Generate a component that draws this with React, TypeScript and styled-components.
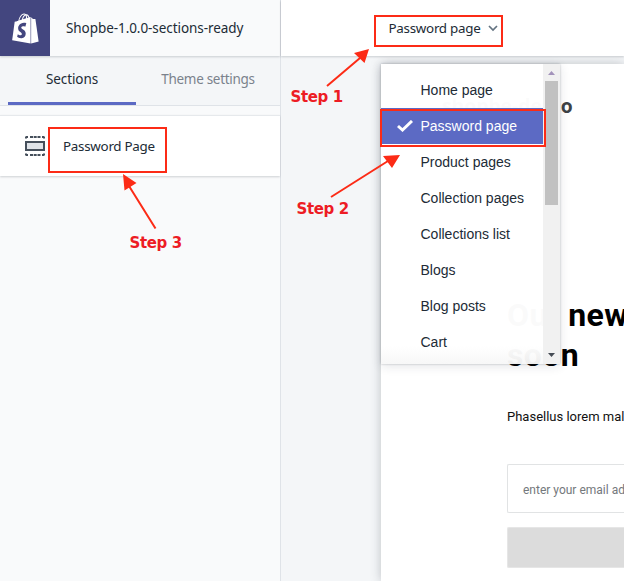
import React from 'react';
import styled, { createGlobalStyle } from 'styled-components';
import { FaShopify } from 'react-icons/fa';

const Global = createGlobalStyle`
  * { box-sizing: border-box; }
  body { margin: 0; background: #f4f6f8; font-family: "Noto Sans", sans-serif; color: #212b36; overflow: hidden; }
  p, h1, h2, ul { margin: 0; padding: 0; }
`;

const Shell = styled.div`
  position: relative;
  width: 624px;
  height: 581px;
  overflow: hidden;
  display: grid;
  grid-template-columns: 281px 1fr;
`;

const Sidebar = styled.aside`
  display: flex;
  flex-direction: column;
  background: #f9fafb;
  border-right: 1px solid #dfe3e8;
`;

const Brand = styled.header`
  height: 56px;
  flex: none;
  display: flex;
  background: #f9fafb;
  box-shadow: 0 1px 2px rgba(33, 43, 54, 0.2);
  z-index: 1;
`;

const LogoTile = styled.div`
  width: 50px;
  display: flex;
  align-items: center;
  justify-content: center;
  background: #43467f;
  color: #fff;
`;

const ThemeName = styled.p`
  padding-left: 16px;
  font-size: 13.5px;
  letter-spacing: -0.07px;
  line-height: 56px;
  white-space: nowrap;
`;

const Tabs = styled.nav`
  height: 50px;
  flex: none;
  display: flex;
  gap: 8px;
  padding: 0 8px;
  background: #f4f6f8;
  border-bottom: 1px solid #dfe3e8;
`;

const Tab = styled.div<{ $active?: boolean }>`
  flex: ${p => (p.$active ? '0 0 128px' : '1')};
  text-align: center;
  font-size: 13.5px;
  letter-spacing: ${p => (p.$active ? '-0.1px' : '-0.3px')};
  line-height: 47px;
  color: ${p => (p.$active ? '#212b36' : '#7a828c')};
  border-bottom: ${p => (p.$active ? '3px solid #5c6ac4' : '0')};
`;

const SectionCard = styled.div`
  margin-top: 9px;
  height: 61px;
  display: flex;
  align-items: center;
  gap: 18px;
  padding-left: 25px;
  background: #fff;
  border-top: 1px solid #e6e9ec;
  box-shadow: 0 1px 2px rgba(33, 43, 54, 0.2);
`;

const SectionName = styled.span`
  font-size: 13.4px;
  letter-spacing: -0.28px;
`;

const Main = styled.main`
  display: flex;
  flex-direction: column;
  background: #f4f6f8;
  min-width: 0;
`;

const TopBar = styled.header`
  height: 56px;
  flex: none;
  display: flex;
  align-items: center;
  padding-left: 107.5px;
  gap: 8px;
  background: #fff;
  font-size: 13.4px;
  letter-spacing: -0.28px;
  box-shadow: 0 1px 2px rgba(33, 43, 54, 0.2);
  z-index: 1;
`;

const Preview = styled.section`
  flex: 1;
  margin: 8px 0 0 100px;
  padding: 31px 0 0 126px;
  background: #fff;
  box-shadow: 0 0 10px rgba(33, 43, 54, 0.26);
  font-family: Roboto, sans-serif;
  white-space: nowrap;
`;

const StoreTitle = styled.h2`
  margin-left: -65px;
  font: 700 19.3px/22px "Open Sans", sans-serif;
  color: #3d4246;
`;

const Headline = styled.h1`
  margin-top: 178px;
  font: 700 32px/40px Roboto, sans-serif;
  letter-spacing: 0.4px;
  color: #000;
`;

const Blurb = styled.p`
  margin-top: 32px;
  font-size: 13px;
  line-height: 20px;
  color: #111;
`;

const EmailField = styled.div`
  margin-top: 37px;
  height: 49px;
  padding-left: 15px;
  border: 1px solid #e1e3e4;
  border-right: 0;
  border-radius: 2px 0 0 2px;
  font-size: 12px;
  line-height: 50px;
  color: #74787c;
`;

const SubmitButton = styled.div`
  margin-top: 14px;
  height: 41px;
  background: #dcdcdc;
  border: 1px solid #e6e6e6;
  border-right: 0;
  border-radius: 2px 0 0 2px;
`;

const Menu = styled.div`
  position: absolute;
  left: 381px;
  top: 64px;
  width: 179px;
  height: 300px;
  display: flex;
  z-index: 2;
  background: linear-gradient(rgba(255,255,255,.98) 94%, rgba(247,247,247,.96));
  box-shadow: 0 0 2px rgba(33, 43, 54, 0.28), 0 2px 10px rgba(33, 43, 54, 0.12);
`;

const Options = styled.ul`
  flex: 1;
  padding-top: 8px;
  list-style: none;
`;

const Option = styled.li<{ $selected?: boolean }>`
  display: flex;
  align-items: center;
  height: 36px;
  padding-left: ${p => (p.$selected ? '15.5px' : '39.5px')};
  gap: 8px;
  font: 14px "Liberation Sans", sans-serif;
  color: ${p => (p.$selected ? '#fff' : '#212b36')};
  background: ${p => (p.$selected ? '#5c6ac4' : 'transparent')};
`;

const ScrollTrack = styled.div`
  width: 17px;
  display: flex;
  flex-direction: column;
  align-items: center;
  background: rgba(241, 241, 241, 0.98);
`;

const ScrollThumb = styled.div`
  width: 13px;
  height: 124px;
  margin-bottom: auto;
  background: #c1c1c1;
`;

const ScrollArrow = styled.svg`
  width: 17px;
  height: 17px;
`;

const Highlight = styled.div<{ $x: number; $y: number; $w: number; $h: number }>`
  position: absolute;
  z-index: 3;
  left: ${p => p.$x}px;
  top: ${p => p.$y}px;
  width: ${p => p.$w}px;
  height: ${p => p.$h}px;
  border: 2px solid #fc2b16;
`;

const StepLabel = styled.span<{ $x: number; $y: number }>`
  position: absolute;
  z-index: 3;
  left: ${p => p.$x}px;
  top: ${p => p.$y}px;
  font: 700 15px/18px "DejaVu Sans", sans-serif;
  letter-spacing: -0.35px;
  white-space: nowrap;
  color: #ed1c24;
`;

const Arrows = styled.svg`
  position: absolute;
  inset: 0;
  z-index: 3;
`;

const pages = ['Home page', 'Password page', 'Product pages', 'Collection pages', 'Collections list', 'Blogs', 'Blog posts', 'Cart'];

const SectionIcon = () => (
  <svg width="20" height="20" viewBox="0 0 20 20">
    <path d="M0 2.500V1l1-1h2v2H2v.5zM5 0h3v2H5zM8.700 0h3v2h-3zM12.500 0h3v2h-3zM17 0h2l1 1v1.500h-2V2h-1zM0 17.500V19l1 1h2v-2H2v-.5zM5 18h3v2H5zM8.700 18h3v2h-3zM12.500 18h3v2h-3zM17 20h2l1-1v-1.500h-2v.5h-1z" fill="#454f5b" />
    <rect x="1" y="6" width="18" height="8" fill="#dfe3e8" stroke="#454f5b" strokeWidth="2" />
  </svg>
);

export default function App() {
  return (
    <Shell>
      <Global />
      <Sidebar>
        <Brand>
          <LogoTile><FaShopify size={31} /></LogoTile>
          <ThemeName>Shopbe-1.0.0-sections-ready</ThemeName>
        </Brand>
        <Tabs>
          <Tab $active>Sections</Tab>
          <Tab>Theme settings</Tab>
        </Tabs>
        <SectionCard>
          <SectionIcon />
          <SectionName>Password Page</SectionName>
        </SectionCard>
      </Sidebar>
      <Main>
        <TopBar>
          <span>Password page</span>
          <svg width="10" height="7" viewBox="0 0 10 7" fill="none" stroke="#637381" strokeWidth="1.7"><path d="M1 1l4 4 4-4" /></svg>
        </TopBar>
        <Preview>
          <StoreTitle>shopbe-demo</StoreTitle>
          <Headline>Our new<br />soon</Headline>
          <Blurb>Phasellus lorem malesuada</Blurb>
          <EmailField>enter your email address</EmailField>
          <SubmitButton />
        </Preview>
      </Main>
      <Menu>
        <Options>
          {pages.map(name => {
            const selected = name === 'Password page';
            return (
              <Option key={name} $selected={selected}>
                {selected && <svg width="16" height="12" viewBox="0 0 16 12" fill="none" stroke="#fff" strokeWidth="3"><path d="M1 6l4.500 4L15 1" /></svg>}
                {name}
              </Option>
            );
          })}
        </Options>
        <ScrollTrack>
          <ScrollArrow><path d="M5 11l3.500-4 3.500 4z" fill="#a393bb" /></ScrollArrow>
          <ScrollThumb />
          <ScrollArrow><path d="M5 6h7l-3.500 4z" fill="#454b54" /></ScrollArrow>
        </ScrollTrack>
      </Menu>
      <Highlight $x={374} $y={15} $w={129} $h={32} />
      <Highlight $x={380} $y={109} $w={166} $h={38} />
      <Highlight $x={48} $y={127} $w={119} $h={46} />
      <Arrows width="624" height="581" stroke="#fc2b16" strokeWidth="2" fill="#fc2b16">
        <path d="M327 86L360 58M331 197L388 161M155.500 228.500L129 186" />
        <path d="M369 49L364.500 63 354 53zM400 155L392 168 383 156zM123 174L136.500 183 124.500 190.500z" stroke="none" />
      </Arrows>
      <StepLabel $x={290.5} $y={88}>Step 1</StepLabel>
      <StepLabel $x={296.5} $y={200}>Step 2</StepLabel>
      <StepLabel $x={129.5} $y={234}>Step 3</StepLabel>
    </Shell>
  );
}
